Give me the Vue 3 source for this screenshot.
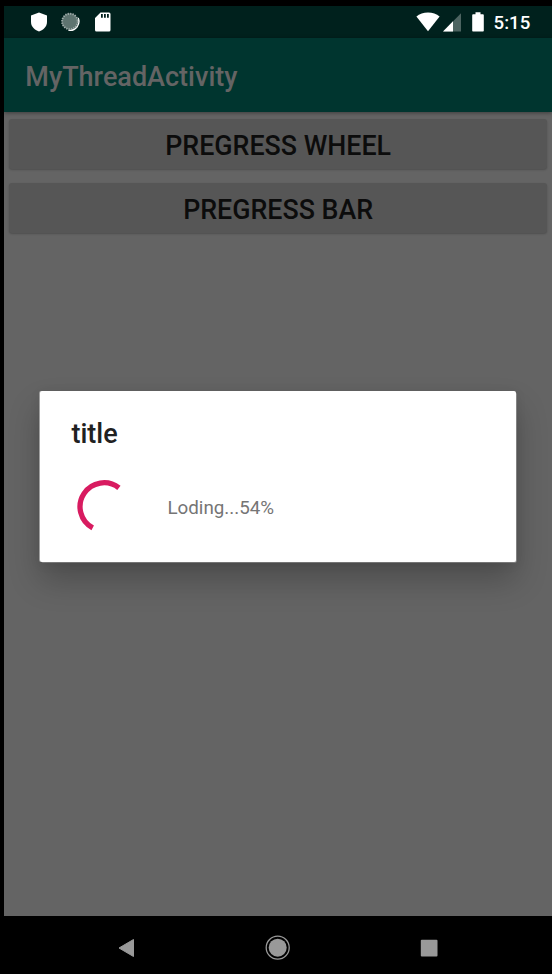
<template>
  <div class="device">
    <div class="screen">
      <header class="status-bar">
        <div class="status-left">
          <svg class="icon-shield" width="18" height="20" viewBox="0 0 18 20">
            <path d="M9 .6 17 3.6V10c0 4.4-3.4 8.1-8 9.4C4.4 18.1 1 14.4 1 10V3.6z" fill="#fff" />
          </svg>
          <svg class="icon-sync" width="20" height="20" viewBox="0 0 20 20">
            <path d="M17.200 6A9.300 9.300 0 0 1 7.500 18.200 8.900 8.900 0 0 0 17.200 6z" fill="#fff" stroke="#fff" stroke-width="1.400" />
            <circle cx="8.900" cy="9.500" r="8.300" fill="#5e7470" />
            <circle cx="8.900" cy="9.500" r="7.800" fill="none" stroke="#a3b0ae" stroke-width="1.900" stroke-dasharray="1.200 1.250" />
          </svg>
          <svg class="icon-sd" width="16" height="20" viewBox="0 0 16 20">
            <path d="M5.5.5H14A1.500 1.500 0 0 1 15.500 2V18a1.500 1.500 0 0 1-1.500 1.500H1.500A1.500 1.500 0 0 1 0 18V6z" fill="#fff" />
            <path d="M6 2h1.800v3.800H6zM9 2h1.800v3.800H9zM12 2h1.800v3.800H12z" fill="#00211d" />
          </svg>
        </div>
        <div class="status-right">
          <svg class="icon-wifi" width="24" height="20" viewBox="0 0 24 20">
            <path d="M12 19.300.400 4.500C3.500 2 7.500.600 12 .600S20.500 2 23.600 4.500z" fill="#fff" />
          </svg>
          <svg class="icon-signal" width="19" height="19" viewBox="0 0 19 19">
            <path d="M18 .2v18.300H0z" fill="#4d6461" />
            <path d="M10 8.300v10.200H0z" fill="#fff" />
          </svg>
          <svg class="icon-battery" width="12" height="20" viewBox="0 0 12 20">
            <path d="M3.500.200h5v2h2.200c.7 0 1.100.4 1.100 1.100v15.100c0 .7-.4 1.100-1.100 1.100H1.300c-.7 0-1.100-.4-1.100-1.100V3.300c0-.7.4-1.100 1.100-1.100h2.200z" fill="#fff" />
          </svg>
          <span class="clock">{{ time }}</span>
        </div>
      </header>

      <div class="toolbar">
        <h1 class="toolbar-title">MyThreadActivity</h1>
      </div>

      <main class="content">
        <button v-for="label in buttons" :key="label" class="btn">{{ label }}</button>
      </main>

      <div class="dialog" role="dialog">
        <h2 class="dialog-title">title</h2>
        <div class="dialog-body">
          <svg class="spinner" width="64" height="64" viewBox="0 0 64 64">
            <path d="M47.900 12.900A24 24 0 1 0 21.700 52.900" fill="none" stroke="#d81b60" stroke-width="5.300" />
          </svg>
          <span class="message">Loding...{{ progress }}%</span>
        </div>
      </div>
    </div>

    <nav class="nav-bar">
      <svg width="26" height="26" viewBox="0 0 26 26">
        <path d="M19.500 4.500v17L5 13z" fill="#999" stroke="#999" stroke-width="1" stroke-linejoin="round" />
      </svg>
      <svg width="26" height="26" viewBox="0 0 26 26">
        <circle cx="12.700" cy="12.700" r="11.500" fill="none" stroke="#999" stroke-width="1.300" />
        <circle cx="12.700" cy="12.700" r="9" fill="#999" />
      </svg>
      <svg width="26" height="26" viewBox="0 0 26 26">
        <rect x="4.800" y="4.800" width="16.700" height="16.700" rx="1" fill="#999" />
      </svg>
    </nav>
  </div>
</template>

<script setup>
import { ref } from 'vue';

const time = ref('5:15');
const progress = ref(54);
const buttons = ['PREGRESS WHEEL', 'PREGRESS BAR'];
</script>

<style>
body { margin: 0; background: #000 }
</style>

<style scoped>
.device {
  width: 552px;
  height: 974px;
  padding: 6px 0 0 4px;
  box-sizing: border-box;
  display: flex;
  flex-direction: column;
  background: #000;
  font-family: Roboto, sans-serif;
}
.screen {
  position: relative;
  height: 910px;
  display: flex;
  flex-direction: column;
  background: #646464;
  overflow: hidden;
}
svg { display: block; flex: none }

.status-bar {
  height: 32px;
  padding: 0 21.7px 0 26px;
  box-sizing: border-box;
  display: flex;
  justify-content: space-between;
  align-items: center;
  background: #00211d;
}
.status-left, .status-right { display: flex; align-items: center }
.icon-sync { margin-left: 13px }
.icon-sd { margin-left: 14px }
.icon-signal { margin-left: 3px }
.icon-battery { margin-left: 10px }
.clock { padding-top: 2px; margin-left: 9.5px; color: #fff; font-size: 18.67px; font-weight: 500; line-height: 30px }

.toolbar {
  position: relative;
  height: 74.4px;
  flex: none;
  padding: 3px 0 0 21.3px;
  box-sizing: border-box;
  display: flex;
  align-items: center;
  background: #00352f;
  box-shadow: 0 1px 4px rgba(0,0,0,0.4);
}
.toolbar-title { margin: 0; color: #646464; font-size: 27px; font-weight: 500; line-height: 32px }

.content { display: flex; flex-direction: column; gap: 14px; padding: 6.6px 4.7px 0 5px }
.btn {
  height: 50px;
  padding: 4.6px 0 0;
  border: 0;
  border-radius: 3px;
  background: #565656;
  color: #0c0c0c;
  font-family: inherit;
  font-size: 26.8px;
  font-weight: 500;
  line-height: 32px;
  box-shadow: 0 1px 2px rgba(0,0,0,0.22);
}

.dialog {
  position: absolute;
  left: 36px;
  top: 385px;
  width: 476px;
  height: 171px;
  box-sizing: border-box;
  padding: 27.4px 31.4px 0;
  border-radius: 2px;
  background: #fff;
  box-shadow: -1px 0 0 #a0a0a0, 1px 1px 0 -0.4px #a0a0a0, 0 18px 32px rgba(0,0,0,0.24), 0 2px 12px rgba(0,0,0,0.08);
}
.dialog-title { margin: 0; color: #212121; font-size: 27px; font-weight: 500; line-height: 32px }
.dialog-body { display: flex; align-items: center; margin-top: 24.6px }
.message { padding-top: 2px; margin-left: 32px; color: #757575; font-size: 18.8px; line-height: 24px }

.nav-bar {
  height: 58px;
  padding-top: 6px;
  box-sizing: border-box;
  display: flex;
  justify-content: center;
  align-items: center;
  gap: 125px;
}
</style>
